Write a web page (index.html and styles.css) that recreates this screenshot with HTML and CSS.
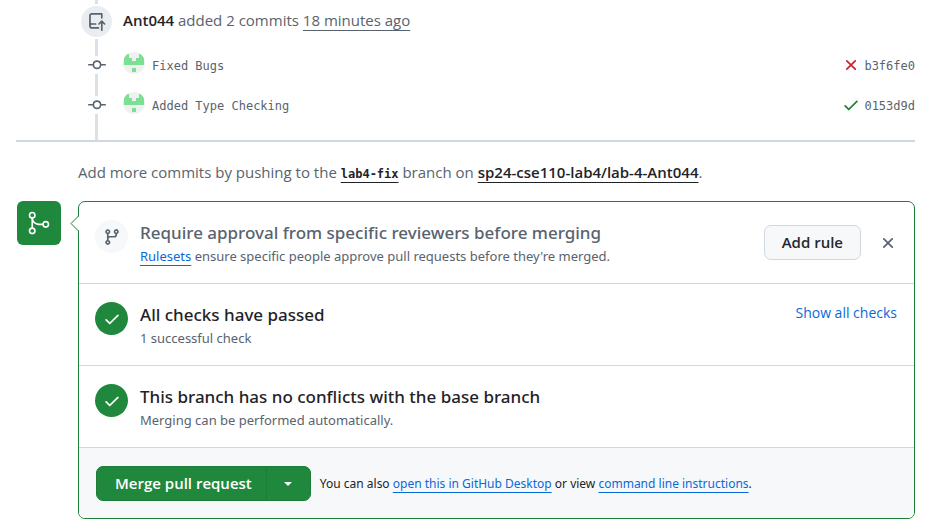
FILE: index.html
```html
<!DOCTYPE html>
<html lang="en">
<head>
<meta charset="utf-8">
<meta name="viewport" content="width=device-width, initial-scale=1">
<title>Pull request</title>
<link rel="stylesheet" href="styles.css">
</head>
<body>
<svg class="defs" aria-hidden="true">
  <symbol id="check" viewBox="0 0 16 16"><path d="M13.78 4.22a.75.75 0 0 1 0 1.06l-7.25 7.25a.75.75 0 0 1-1.06 0L2.22 9.28a.751.751 0 0 1 .018-1.042.751.751 0 0 1 1.042-.018L6 10.94l6.72-6.72a.75.75 0 0 1 1.06 0Z"/></symbol>
  <symbol id="x" viewBox="0 0 16 16"><path d="M3.72 3.72a.75.75 0 0 1 1.06 0L8 6.94l3.22-3.22a.749.749 0 0 1 1.275.326.749.749 0 0 1-.215.734L9.06 8l3.22 3.22a.749.749 0 0 1-.326 1.275.749.749 0 0 1-.734-.215L8 9.06l-3.22 3.22a.751.751 0 0 1-1.042-.018.751.751 0 0 1-.018-1.042L6.94 8 3.72 4.78a.75.75 0 0 1 0-1.06Z"/></symbol>
  <symbol id="commit" viewBox="0 0 16 16"><path d="M11.93 8.5a4.002 4.002 0 0 1-7.86 0H.75a.75.75 0 0 1 0-1.5h3.32a4.002 4.002 0 0 1 7.86 0h3.32a.75.75 0 0 1 0 1.5Zm-1.43-.75a2.5 2.5 0 1 0-5 0 2.5 2.5 0 0 0 5 0Z"/></symbol>
  <symbol id="push" viewBox="0 0 16 16"><path d="M1 2.5A2.5 2.5 0 0 1 3.5 0h8.75a.75.75 0 0 1 .75.75v3.5a.75.75 0 0 1-1.5 0V1.5h-8a1 1 0 0 0-1 1v6.708A2.493 2.493 0 0 1 3.5 9h3.25a.75.75 0 0 1 0 1.5H3.5a1 1 0 0 0 0 2h5.75a.75.75 0 0 1 0 1.5H3.5A2.5 2.5 0 0 1 1 11.5Zm13.23 7.79-1.224-1.224v6.184a.75.75 0 0 1-1.5 0V9.066L10.28 10.29a.75.75 0 0 1-1.06-1.061l2.505-2.504a.75.75 0 0 1 1.06 0L15.29 9.23a.751.751 0 0 1-.018 1.042.751.751 0 0 1-1.042.018Z"/></symbol>
  <symbol id="merge-large" viewBox="0 0 24 24"><path d="M15 13.25a3.25 3.25 0 1 1 6.5 0 3.25 3.25 0 0 1-6.5 0Zm-12.5 6a3.25 3.25 0 1 1 6.5 0 3.25 3.25 0 0 1-6.5 0Zm0-14.5a3.25 3.25 0 1 1 6.5 0 3.25 3.25 0 0 1-6.5 0ZM5.75 6.5a1.75 1.75 0 1 0-.001-3.501A1.75 1.75 0 0 0 5.75 6.5Zm0 14.5a1.75 1.75 0 1 0-.001-3.501A1.75 1.75 0 0 0 5.75 21Zm12.5-6a1.75 1.75 0 1 0-.001-3.501A1.75 1.75 0 0 0 18.25 15Z"/><path d="M6.5 7.25c0 2.9 2.35 5.25 5.25 5.25h4.5V14h-4.5A6.75 6.75 0 0 1 5 7.25Z"/><path d="M5.75 16.75A.75.75 0 0 1 5 16V8a.75.75 0 0 1 1.5 0v8a.75.75 0 0 1-.75.75Z"/></symbol>
  <symbol id="branch" viewBox="0 0 16 16"><path d="M9.5 3.25a2.25 2.25 0 1 1 3 2.122V6A2.5 2.5 0 0 1 10 8.5H6a1 1 0 0 0-1 1v1.128a2.251 2.251 0 1 1-1.5 0V5.372a2.25 2.25 0 1 1 1.5 0v1.836A2.493 2.493 0 0 1 6 7h4a1 1 0 0 0 1-1v-.628A2.25 2.25 0 0 1 9.5 3.25Zm-6 0a.75.75 0 1 0 1.5 0 .75.75 0 0 0-1.5 0Zm8.25-.75a.75.75 0 1 0 0 1.5.75.75 0 0 0 0-1.5ZM4.25 12a.75.75 0 1 0 0 1.5.75.75 0 0 0 0-1.5Z"/></symbol>
  <symbol id="identicon" viewBox="0 0 22 22"><path fill="#f0f0f0" d="M0 0h22v22H0z"/><path fill="#7be094" d="M1 2h5v4h3v3h4V6h3V2h5v11H1zM9 16h4v4H9z"/></symbol>
</svg>
<main class="page">
  <section class="timeline">
    <div class="event event-head">
      <div class="rail"><span class="line"></span><span class="badge"><svg class="icon"><use href="#push"/></svg></span><span class="line"></span></div>
      <p class="summary"><a class="author" href="#">Ant044</a> added 2 commits <a class="time" href="#">18 minutes ago</a></p>
    </div>
    <div class="event">
      <div class="rail"><span class="line"></span><svg class="icon"><use href="#commit"/></svg><span class="line"></span></div>
      <svg class="avatar" role="img" aria-label="Ant044"><use href="#identicon"/></svg>
      <a class="message" href="#">Fixed Bugs</a>
      <svg class="icon status fail"><use href="#x"/></svg>
      <a class="hash" href="#">b3f6fe0</a>
    </div>
    <div class="event">
      <div class="rail"><span class="line"></span><svg class="icon"><use href="#commit"/></svg><span class="line"></span></div>
      <svg class="avatar" role="img" aria-label="Ant044"><use href="#identicon"/></svg>
      <a class="message" href="#">Added Type Checking</a>
      <svg class="icon status pass"><use href="#check"/></svg>
      <a class="hash" href="#">0153d9d</a>
    </div>
    <div class="event event-tail"><div class="rail"><span class="line"></span></div></div>
  </section>

  <p class="hint">Add more commits by pushing to the <a class="ref" href="#">lab4-fix</a> branch on <a class="repo" href="#">sp24-cse110-lab4/lab-4-Ant044</a>.</p>

  <section class="merge">
    <div class="merge-badge"><svg><use href="#merge-large"/></svg></div>
    <div class="box">
      <svg class="caret" viewBox="0 0 9 17"><path class="caret-fill" d="M9 1 1.500 8.500 9 16z"/><path class="caret-line" d="M8.500 .500v.500L1 8.500 8.500 16v.500"/></svg>
      <div class="row">
        <span class="disc disc-muted"><svg class="icon"><use href="#branch"/></svg></span>
        <div class="body">
          <h3 class="muted">Require approval from specific reviewers before merging</h3>
          <p><a href="#">Rulesets</a> ensure specific people approve pull requests before they're merged.</p>
        </div>
        <div class="actions">
          <button class="btn" type="button">Add rule</button>
          <button class="close" type="button" aria-label="Dismiss"><svg class="icon"><use href="#x"/></svg></button>
        </div>
      </div>
      <div class="row">
        <span class="disc"><svg class="icon"><use href="#check"/></svg></span>
        <div class="body">
          <h3>All checks have passed</h3>
          <p>1 successful check</p>
        </div>
        <button class="toggle" type="button">Show all checks</button>
      </div>
      <div class="row">
        <span class="disc"><svg class="icon"><use href="#check"/></svg></span>
        <div class="body">
          <h3>This branch has no conflicts with the base branch</h3>
          <p>Merging can be performed automatically.</p>
        </div>
      </div>
      <div class="foot">
        <div class="group">
          <button class="primary" type="button">Merge pull request</button>
          <button class="primary more" type="button" aria-label="Select merge method"><span class="arrow"></span></button>
        </div>
        <p>You can also <a href="#">open this in GitHub Desktop</a> or view <a href="#">command line instructions</a>.</p>
      </div>
    </div>
  </section>
</main>
</body>
</html>
```
FILE: styles.css
```css
* { box-sizing: border-box; }
body {
  margin: 0;
  background: #fff;
  color: #1f2328;
  font: 15px/21px "Open Sans", "Noto Sans", sans-serif;
}
p, h3 { margin: 0; }
a { color: inherit; text-decoration: none; }
button { font: inherit; cursor: pointer; }
.defs { position: absolute; width: 0; height: 0; }
.icon { display: block; flex: none; width: 18px; height: 18px; fill: currentColor; }
.page { padding: 0 14px 11px 16px; }

.timeline { border-bottom: 2px solid #d0d7de; color: #59636e; }
.event { display: flex; align-items: center; height: 40px; padding-left: 65px; }
.event-head { height: 45px; }
.event-tail { height: 15px; }
.rail {
  display: flex;
  flex-direction: column;
  align-items: center;
  align-self: stretch;
  width: 31px;
  margin-right: 11px;
}
.line { flex: 1; width: 3px; background: #dce1e6; }
.badge {
  display: grid;
  place-items: center;
  width: 31px;
  height: 31px;
  margin: 2px 0;
  border-radius: 50%;
  background: #e9edf1;
}
.event-head .line:first-child { flex: none; height: 4px; }
.summary { padding-bottom: 4px; }
.author, .repo { color: #1f2328; font-weight: 600; }
.time, .ref, .repo, .body a, .foot a {
  text-decoration: underline 1px;
  text-underline-offset: 4px;
  text-decoration-skip-ink: none;
}
.avatar { width: 22px; height: 22px; margin: 0 7px 5px 0; border-radius: 50%; }
.message, .hash { padding-top: 2px; font: 12px/18px "DejaVu Sans Mono", monospace; }
.status { margin-left: auto; }
.status + .hash { margin-left: 4px; }
.fail { color: #cf222e; }
.pass { color: #1a7f37; }

.hint { padding: 20px 0 18px 62px; color: #59636e; }
.ref { color: #1f2328; font: 600 12px/18px "DejaVu Sans Mono", monospace; }

.merge { display: flex; align-items: flex-start; gap: 17px; padding-left: 1px; }
.merge-badge {
  display: grid;
  flex: none;
  place-items: center;
  width: 44px;
  height: 44px;
  border-radius: 6px;
  background: #1f883d;
}
.merge-badge svg { width: 26px; height: 26px; fill: #fff; }
.box { position: relative; flex: 1; border: 1px solid #1a7f37; border-radius: 7px; }
.caret { position: absolute; top: 13px; left: -9px; width: 9px; height: 17px; }
.caret-fill { fill: #fff; }
.caret-line { fill: none; stroke: #1a7f37; }
.row {
  display: flex;
  align-items: flex-start;
  min-height: 82px;
  padding: 18px 17px 16px 16px;
  border-bottom: 1px solid #d0d7de;
}
.disc {
  display: grid;
  flex: none;
  place-items: center;
  width: 33px;
  height: 33px;
  margin-right: 12px;
  border-radius: 50%;
  background: #1f883d;
  color: #fff;
}
.disc-muted { background: #f6f8fa; color: #59636e; }
.body { flex: 1; }
.body h3 { font: 500 17px/25px "Noto Sans", sans-serif; }
.body h3.muted { color: #59636e; }
.body p { color: #59636e; font: 13px/22px "Noto Sans", sans-serif; }
.body a, .foot a, .toggle { color: #0969da; }
.actions { display: flex; align-items: center; gap: 18px; padding-top: 5px; }
.btn {
  height: 35px;
  padding: 0 17px;
  border: 1px solid #d0d7de;
  border-radius: 7px;
  background: #f6f8fa;
  color: #25292e;
  font-weight: 600;
}
.close { padding: 0; border: 0; background: none; color: #59636e; }
.toggle { padding: 0; border: 0; background: none; font-size: 14px; }
.foot {
  display: flex;
  align-items: center;
  gap: 9px;
  padding: 18px 17px 17px;
  border-radius: 0 0 6px 6px;
  background: #f6f8fa;
}
.foot p { font: 12px/21px "Noto Sans", sans-serif; }
.group { display: flex; flex: none; }
.primary {
  height: 35px;
  padding: 0 14px 0 18px;
  border: 1px solid #1c7c38;
  border-radius: 7px 0 0 7px;
  background: #1f883d;
  color: #fff;
  font-weight: 600;
}
.more { display: grid; place-items: center; width: 45px; margin-left: -1px; padding: 0; border-radius: 0 7px 7px 0; }
.arrow { border: 4px solid transparent; border-top-color: #fff; border-bottom: 0; }
```
